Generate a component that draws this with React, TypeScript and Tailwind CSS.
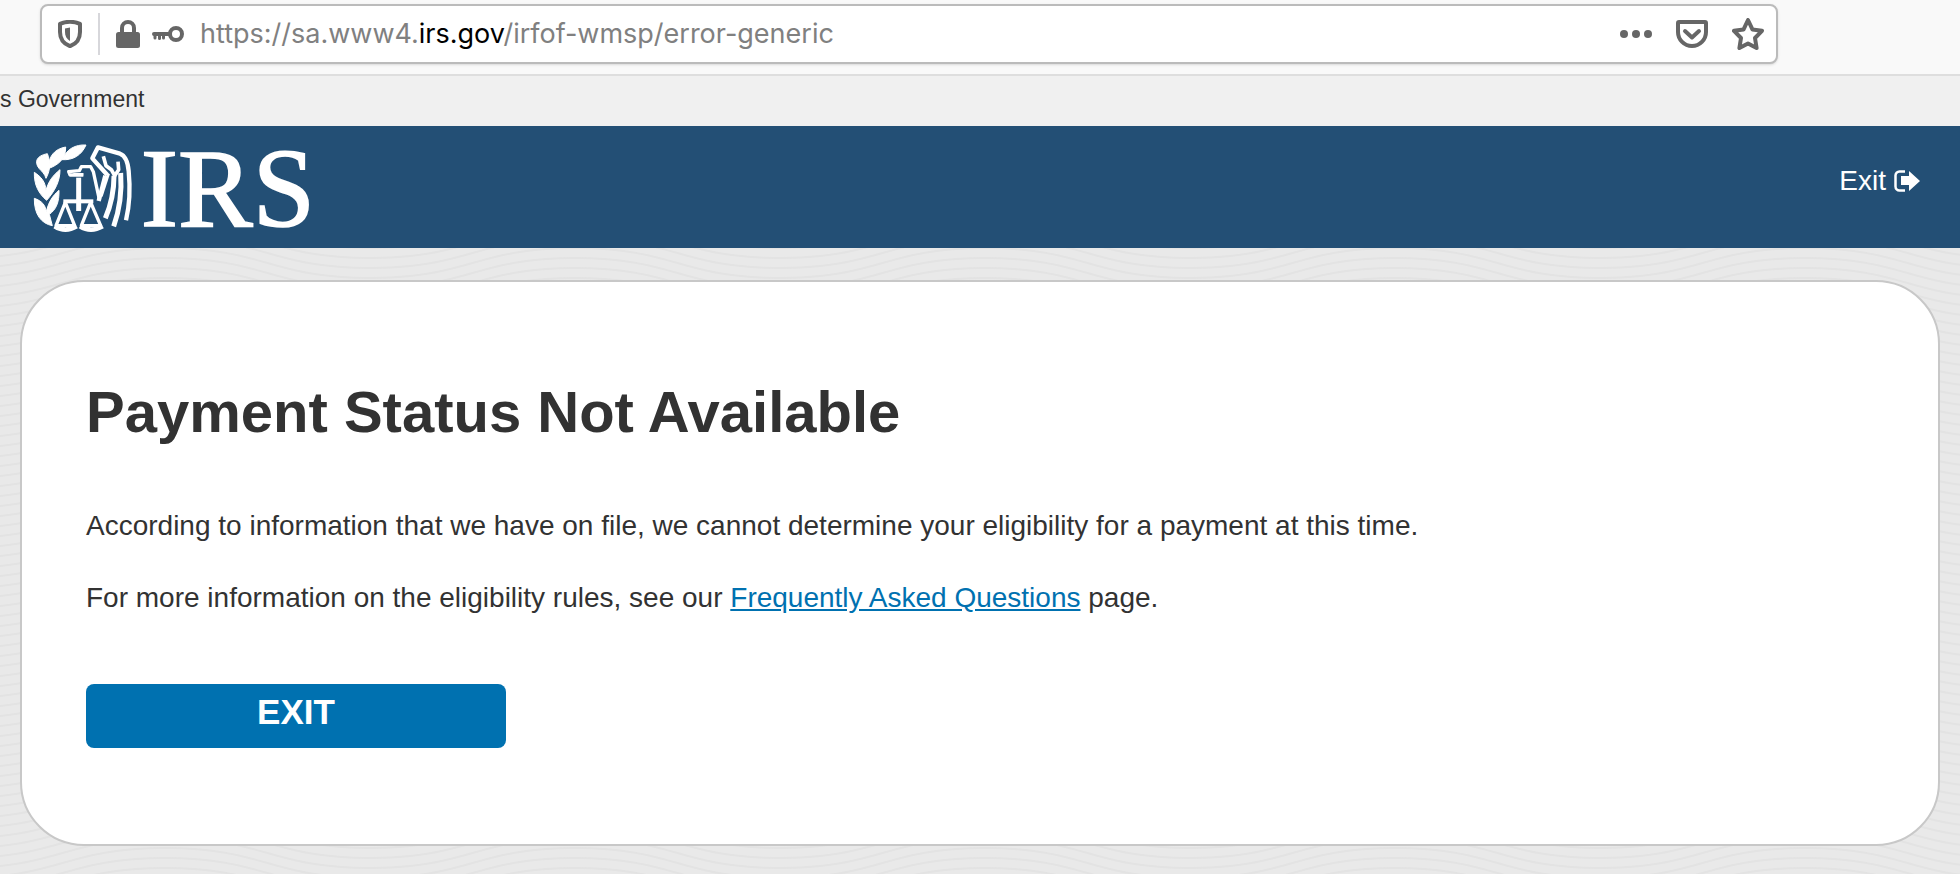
import React from 'react';

const UrlBar = () => (
  <div className="bg-[#f9f9f9] border-b-2 border-[#dedede] pt-1 pb-2.5 pl-10 pr-[182px]">
    <div className="flex items-center h-[60px] bg-white border-2 border-[#bbbbbb] rounded-lg shadow-sm pl-4 pr-3">
      <button type="button" aria-label="Tracking protection" className="text-[#666666]">
        <svg className="w-6 h-7" viewBox="0 0 24 28" fill="none">
          <path d="M12 1.8C8.500 1.800 5 2.500 2 3.800V12C2 19 6 24 12 26.200C18 24 22 19 22 12V3.800C19 2.500 15.500 1.800 12 1.800Z" stroke="currentColor" strokeWidth="4" strokeLinejoin="round" />
          <path d="M12 7.500V21C8.500 19 7 16 7 12V8.500Z" fill="currentColor" />
        </svg>
      </button>
      <div className="w-0.5 h-[42px] bg-[#d7d7db] ml-4" />
      <button type="button" aria-label="Connection secure" className="text-[#666666] ml-4">
        <svg className="w-6 h-7" viewBox="0 0 24 28" fill="none">
          <rect x="0" y="12" width="24" height="16" rx="2.500" fill="currentColor" />
          <path d="M6 13V8a6 6 0 0 1 12 0V13" stroke="currentColor" strokeWidth="4" />
        </svg>
      </button>
      <button type="button" aria-label="Saved login" className="text-[#666666] ml-3">
        <svg className="w-8 h-4" viewBox="0 0 32 16" fill="none">
          <circle cx="24" cy="8" r="6" stroke="currentColor" strokeWidth="4" />
          <path d="M2 8H18" stroke="currentColor" strokeWidth="4" strokeLinecap="round" />
          <path d="M3 8V12M7.500 8V12.500M11.500 8V12" stroke="currentColor" strokeWidth="3" strokeLinecap="round" />
        </svg>
      </button>
      <div className="flex-1 ml-4 text-[27px] leading-8 text-[#808080] whitespace-nowrap font-['Inter',sans-serif]">
        https://sa.www4.<span className="text-black">irs.gov</span>/irfof-wmsp/error-generic
      </div>
      <div className="flex items-center gap-6 text-[#666666]">
        <button type="button" aria-label="Page actions">
          <svg className="w-8 h-8" viewBox="0 0 32 32" fill="currentColor">
            <circle cx="4" cy="16" r="4" />
            <circle cx="16" cy="16" r="4" />
            <circle cx="28" cy="16" r="4" />
          </svg>
        </button>
        <button type="button" aria-label="Save to Pocket">
          <svg className="w-8 h-8" viewBox="0 0 32 32" fill="none" stroke="currentColor" strokeWidth="4" strokeLinecap="round" strokeLinejoin="round">
            <path d="M3 4H29a1 1 0 0 1 1 1V14a14 14 0 0 1-28 0V5a1 1 0 0 1 1-1Z" />
            <path d="M9 13L16 19.500L23 13" />
          </svg>
        </button>
        <button type="button" aria-label="Bookmark this page">
          <svg className="w-8 h-8" viewBox="0 0 32 32" fill="none" stroke="currentColor" strokeWidth="4" strokeLinejoin="round">
            <path d="M16 2L20.400 11.400L30 12.800L23 20L24.600 30L16 25.400L7.400 30L9 20L2 12.800L11.600 11.400Z" />
          </svg>
        </button>
      </div>
    </div>
  </div>
);

const IrsLogo = () => (
  <svg className="w-[280px] h-[92px] overflow-visible" viewBox="30 30 840 276" role="img" aria-label="IRS">
    <g fill="#fff" stroke="#fff" strokeWidth="3" strokeLinejoin="round">
      {/* olive branch */}
      <path d="M198 42C166 40 140 54 126 86C158 88 184 74 198 42Z" />
      <path d="M137 48C104 54 84 76 87 112C114 102 138 84 137 48Z" />
      <path d="M82 68C50 74 42 92 57 112C66 122 74 128 78 142C92 116 92 92 82 68Z" />
      <path d="M43 124C64 138 76 152 78 178C86 150 98 134 120 116C120 150 106 178 80 208C56 188 42 162 43 124Z" />
      <path d="M43 202C66 210 76 222 79 242C86 212 98 194 117 178C118 214 108 236 88 250L97 284C64 278 42 250 43 202Z" />
    </g>
    <g fill="none" stroke="#fff" strokeWidth="10" strokeLinejoin="round">
      {/* scales */}
      <path d="M130 211H220" strokeWidth="12" />
      <path d="M176 140V240" strokeWidth="15" />
      <path d="M136 214L108 284H164ZM212 214L184 284H242Z" />
      <path d="M104 286Q136 306 170 286M180 286Q212 306 248 286" strokeWidth="14" />
      {/* eagle */}
      <path d="M190 132H150L146 122L178 119L184 107H212L220 122L238 206" />
      <path d="M160 130H190" strokeWidth="8" />
      <path d="M236 210L256 134" strokeWidth="13" />
      <path d="M262 132L217 82L234 49L300 68Q322 76 326 120Q334 200 318 268" strokeWidth="13" />
      <path d="M250 76L258 104L274 116L284 134L296 116L294 92" strokeWidth="11" />
      <path d="M282 134Q282 200 256 262M302 126Q308 210 281 286" strokeWidth="15" />
      <path d="M266 128L244 196" strokeWidth="8" />
    </g>
    <text x="362" y="286" fontSize="336" fill="#fff" stroke="#fff" strokeWidth="5" className="font-['Liberation_Serif',serif]">IRS</text>
  </svg>
);

const Header = () => (
  <header className="flex items-center justify-between h-[122px] bg-[#234f75] pl-[30px] pr-10">
    <a href="#home"><IrsLogo /></a>
    <a href="#exit" className="flex items-center gap-2 text-[28px] leading-8 text-white mb-3">
      Exit
      <svg className="w-[26px] h-[22px]" viewBox="0 0 26 22" fill="none">
        <path d="M11 1.500H5.500a4 4 0 0 0-4 4V16.500a4 4 0 0 0 4 4H11" stroke="#fff" strokeWidth="2.500" />
        <path d="M7 6H15V1L26 11L15 21V15H7Z" fill="#fff" />
      </svg>
    </a>
  </header>
);

// Wavy texture behind the card
const Waves = () => (
  <svg className="absolute inset-0 w-full h-full" aria-hidden="true">
    <defs>
      <pattern id="waves" width="410" height="10" patternUnits="userSpaceOnUse">
        {[-40, -30, -20, -10, 0, 10, 20, 30, 40].map(y => (
          <path key={y} d={`M-40 ${y + 20}C60 ${y + 20} 65 ${y - 10} 165 ${y - 10}S270 ${y + 20} 370 ${y + 20}S475 ${y - 10} 575 ${y - 10}`} fill="none" stroke="#e3e3e3" strokeWidth="2" />
        ))}
      </pattern>
    </defs>
    <rect width="100%" height="100%" fill="url(#waves)" />
  </svg>
);

export default function App() {
  return (
    <div className="flex flex-col min-h-screen overflow-hidden bg-[#e9e9e9] text-[#323232] font-['Liberation_Sans',Arial,sans-serif]">
      <UrlBar />
      <div className="h-[50px] bg-[#f0f0f0] text-[23px] leading-[46px] whitespace-nowrap">s Government</div>
      <Header />
      <main className="relative flex-1 px-5 pt-8 pb-7">
        <Waves />
        <section className="relative bg-white border-2 border-[#c8c8c8] rounded-[64px] px-16 pt-24 pb-24">
          <h1 className="text-[58px] leading-[68px] font-bold">Payment Status Not Available</h1>
          <p className="mt-[62px] text-[28px] leading-9">
            According to information that we have on file, we cannot determine your eligibility for a payment at this time.
          </p>
          <p className="mt-9 text-[28px] leading-9">
            For more information on the eligibility rules, see our{' '}
            <a href="#faq" className="text-[#0071b0] underline">Frequently Asked Questions</a> page.
          </p>
          <button type="button" className="block w-[420px] h-16 mt-[68px] pb-2 rounded-lg bg-[#0071b0] text-white text-[35px] leading-10 font-bold">
            EXIT
          </button>
        </section>
      </main>
    </div>
  );
}
